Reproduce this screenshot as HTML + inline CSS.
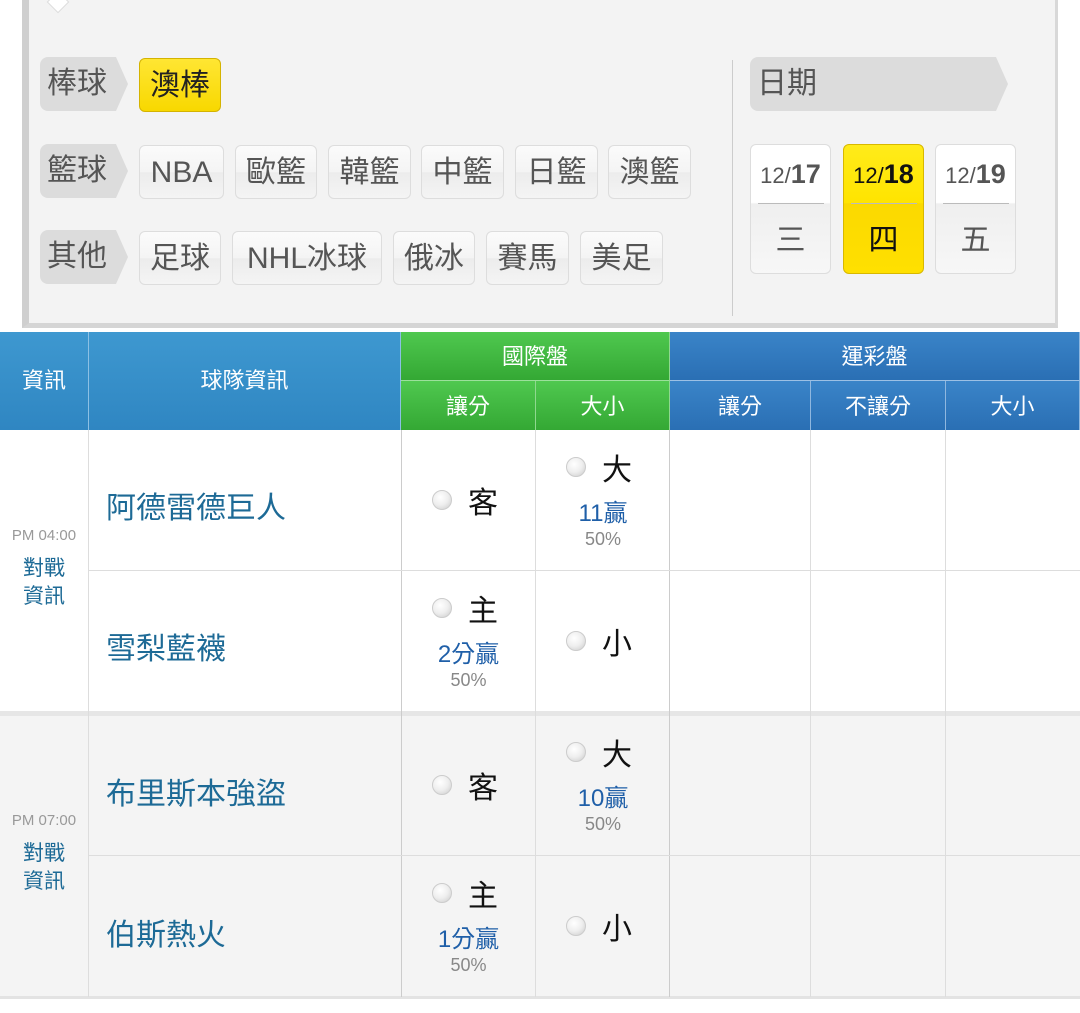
<!DOCTYPE html>
<html><head><meta charset="utf-8"><style>
*{margin:0;padding:0;box-sizing:border-box}
body{width:1080px;height:1013px;background:#fff;position:relative;overflow:hidden;font-family:"Liberation Sans","Noto Sans CJK TC",sans-serif}
.a{position:absolute}
.panel{left:22px;top:-4px;width:1036px;height:332px;background:#f3f3f3;border-left:7px solid #cfcfcf;border-right:3px solid #d8d8d8;border-bottom:5px solid #d5d5d5}
.lab{position:absolute;height:54px;background:#dcdcdc;border-radius:8px 0 0 8px;color:#555;font-size:30px;line-height:54px;padding-left:7px}
.lab:after{content:"";position:absolute;right:-12px;top:0;border-left:12px solid #dcdcdc;border-top:27px solid transparent;border-bottom:27px solid transparent}
.btn{position:absolute;height:54px;background:linear-gradient(#fbfbfb,#f4f4f4 50%,#ececec 51%,#f4f4f4);border:1px solid #ddd;border-radius:6px;color:#555;font-size:30px;line-height:54px;text-align:center}
.btn.y{background:linear-gradient(#ffe633,#f8d800);border-color:#d4b300;color:#222}
.dt{position:absolute;top:144px;width:81px;height:130px;border:1px solid #ddd;border-radius:6px;background:linear-gradient(#fff,#fff 45%,#efefef 46%,#f7f7f7);text-align:center;color:#555}
.dt.y{background:linear-gradient(#ffeb1a,#ffe400 45%,#fbd900 46%,#ffe000);border-color:#d8b800;color:#111}
.dt .d{font-size:22px;padding-top:14px;height:58px}
.dt .d b{font-size:27px}
.dt hr{border:0;border-top:1px solid #bbb;width:66px;margin:0 auto}
.dt .w{font-size:30px;margin-top:11px}
.hb{background:linear-gradient(#3e98d0,#2f86c2);color:#fff;font-size:22px;text-align:center;border-right:1px solid #8cc0e4}
.hg{background:linear-gradient(#4fc84f,#34a834);color:#fff;font-size:22px;text-align:center;border-right:1px solid #8fd88f}
.hd{background:linear-gradient(#3a84c8,#2a6fb4);color:#fff;font-size:22px;text-align:center;border-right:1px solid #8fb7df}
.team{color:#1d6a96;font-size:30px}
.rad{position:absolute;width:20px;height:20px;border-radius:50%;background:radial-gradient(circle at 40% 35%,#fff,#eee 50%,#c9c9c9);border:1px solid #ccc}
.big{position:absolute;font-size:30px;color:#111}
.win{position:absolute;color:#1f5fa8;font-size:24px;text-align:center}
.pct{position:absolute;color:#888;font-size:18px;text-align:center}
</style></head><body>
<div class="a panel"></div>
<div class="a" style="left:50px;top:-6px;width:16px;height:16px;background:#fff;transform:rotate(45deg);border:1px solid #ddd"></div>
<div class="lab" style="left:40px;top:57px;width:76px">棒球</div>
<div class="lab" style="left:40px;top:144px;width:76px">籃球</div>
<div class="lab" style="left:40px;top:230px;width:76px">其他</div>
<div class="btn y" style="left:139px;top:58px;width:82px">澳棒</div>
<div class="btn" style="left:139px;top:145px;width:85px">NBA</div>
<div class="btn" style="left:235px;top:145px;width:82px">歐籃</div>
<div class="btn" style="left:328px;top:145px;width:83px">韓籃</div>
<div class="btn" style="left:421px;top:145px;width:83px">中籃</div>
<div class="btn" style="left:515px;top:145px;width:83px">日籃</div>
<div class="btn" style="left:608px;top:145px;width:83px">澳籃</div>
<div class="btn" style="left:139px;top:231px;width:82px">足球</div>
<div class="btn" style="left:232px;top:231px;width:150px">NHL冰球</div>
<div class="btn" style="left:393px;top:231px;width:82px">俄冰</div>
<div class="btn" style="left:486px;top:231px;width:83px">賽馬</div>
<div class="btn" style="left:580px;top:231px;width:83px">美足</div>
<div class="a" style="left:732px;top:60px;width:1px;height:256px;background:#ccc"></div>
<div class="lab" style="left:750px;top:57px;width:246px">日期</div>
<div class="dt" style="left:750px"><div class="d">12/<b>17</b></div><hr><div class="w">三</div></div>
<div class="dt y" style="left:843px"><div class="d">12/<b>18</b></div><hr><div class="w">四</div></div>
<div class="dt" style="left:935px"><div class="d">12/<b>19</b></div><hr><div class="w">五</div></div>

<div class="a hb" style="left:0;top:332px;width:89px;height:98px;line-height:98px">資訊</div>
<div class="a hb" style="left:89px;top:332px;width:312px;height:98px;line-height:98px">球隊資訊</div>
<div class="a hg" style="left:401px;top:332px;width:269px;height:49px;line-height:50px;border-bottom:1px solid #9be09b">國際盤</div>
<div class="a hg" style="left:401px;top:381px;width:135px;height:49px;line-height:52px">讓分</div>
<div class="a hg" style="left:536px;top:381px;width:134px;height:49px;line-height:52px">大小</div>
<div class="a hd" style="left:670px;top:332px;width:410px;height:49px;line-height:50px;border-bottom:1px solid #9cc0e4">運彩盤</div>
<div class="a hd" style="left:670px;top:381px;width:141px;height:49px;line-height:52px">讓分</div>
<div class="a hd" style="left:811px;top:381px;width:135px;height:49px;line-height:52px">不讓分</div>
<div class="a hd" style="left:946px;top:381px;width:134px;height:49px;line-height:52px">大小</div>

<div class="a" style="left:0;top:430px;width:1080px;height:282px;background:#fff"></div>
<div class="a" style="left:0;top:711px;width:1080px;height:5px;background:#e6e6e6"></div>
<div class="a" style="left:0;top:716px;width:1080px;height:281px;background:#f4f4f4"></div>
<div class="a" style="left:0;top:996px;width:1080px;height:3px;background:#e3e3e3"></div>
<div class="a" style="left:88px;top:430px;width:1px;height:567px;background:#ddd"></div>
<div class="a" style="left:401px;top:430px;width:1px;height:567px;background:#ccc"></div>
<div class="a" style="left:535px;top:430px;width:1px;height:567px;background:#ddd"></div>
<div class="a" style="left:669px;top:430px;width:1px;height:567px;background:#ccc"></div>
<div class="a" style="left:810px;top:430px;width:1px;height:567px;background:#ddd"></div>
<div class="a" style="left:945px;top:430px;width:1px;height:567px;background:#ddd"></div>
<div class="a" style="left:89px;top:570px;width:991px;height:1px;background:#ddd"></div>
<div class="a" style="left:89px;top:855px;width:991px;height:1px;background:#ddd"></div>

<div class="a" style="left:0;top:527px;width:88px;text-align:center;color:#999;font-size:15px">PM 04:00</div>
<div class="a" style="left:0;top:555px;width:88px;text-align:center;color:#1d6a96;font-size:21px;line-height:28px">對戰<br>資訊</div>
<div class="a" style="left:0;top:812px;width:88px;text-align:center;color:#999;font-size:15px">PM 07:00</div>
<div class="a" style="left:0;top:840px;width:88px;text-align:center;color:#1d6a96;font-size:21px;line-height:28px">對戰<br>資訊</div>

<div class="a team" style="left:106px;top:483px">阿德雷德巨人</div>
<div class="a team" style="left:106px;top:624px">雪梨藍襪</div>
<div class="a team" style="left:106px;top:769px">布里斯本強盜</div>
<div class="a team" style="left:106px;top:910px">伯斯熱火</div>

<div class="rad" style="left:432px;top:490px"></div><div class="big" style="left:468px;top:478px">客</div>
<div class="rad" style="left:566px;top:457px"></div><div class="big" style="left:602px;top:445px">大</div>
<div class="win" style="left:536px;top:493px;width:134px">11贏</div>
<div class="pct" style="left:536px;top:529px;width:134px">50%</div>
<div class="rad" style="left:432px;top:598px"></div><div class="big" style="left:468px;top:586px">主</div>
<div class="win" style="left:401px;top:634px;width:135px">2分贏</div>
<div class="pct" style="left:401px;top:670px;width:135px">50%</div>
<div class="rad" style="left:566px;top:631px"></div><div class="big" style="left:602px;top:619px">小</div>
<div class="rad" style="left:432px;top:775px"></div><div class="big" style="left:468px;top:763px">客</div>
<div class="rad" style="left:566px;top:742px"></div><div class="big" style="left:602px;top:730px">大</div>
<div class="win" style="left:536px;top:778px;width:134px">10贏</div>
<div class="pct" style="left:536px;top:814px;width:134px">50%</div>
<div class="rad" style="left:432px;top:883px"></div><div class="big" style="left:468px;top:871px">主</div>
<div class="win" style="left:401px;top:919px;width:135px">1分贏</div>
<div class="pct" style="left:401px;top:955px;width:135px">50%</div>
<div class="rad" style="left:566px;top:916px"></div><div class="big" style="left:602px;top:904px">小</div>
</body></html>
